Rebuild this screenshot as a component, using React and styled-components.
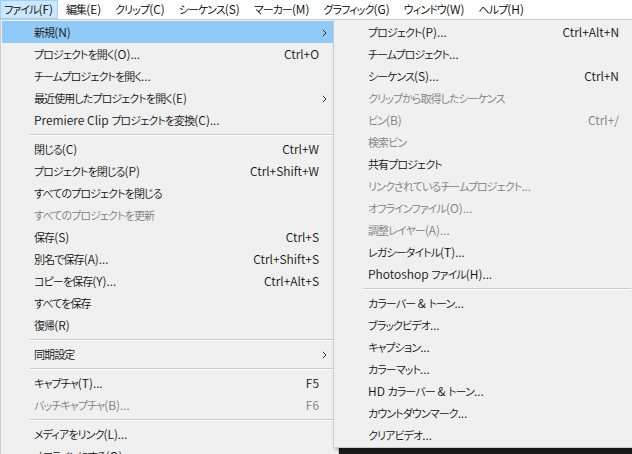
import React from "react";
import styled, { createGlobalStyle } from "styled-components";

const GlobalStyle = createGlobalStyle`
  html, body { margin: 0; padding: 0; background: #1b1b1b; }
  body {
    font-family: "Noto Sans CJK JP", "Noto Sans", sans-serif;
    font-size: 12px;
    font-weight: 350;
    color: #000;
  }
`;

const Page = styled.div`
  position: relative;
  width: 632px;
  height: 454px;
  overflow: hidden;
  background: #1b1b1b;
`;

const MenuBar = styled.div`
  display: flex;
  height: 19px;
  background: #ffffff;
`;

const BarItem = styled.div`
  display: flex;
  align-items: center;
  padding: 0 6px 1px;
  border: 1px solid ${(p) => (p.$active ? "#99d1ff" : "transparent")};
  background: ${(p) => (p.$active ? "#cce8ff" : "transparent")};
  white-space: nowrap;
  line-height: 1;
  &:first-child { padding-left: 3px; padding-right: 4px; margin-right: 1px; }
`;

const Kana = styled.span`
  font-size: 11px;
  letter-spacing: -0.9px;
  font-feature-settings: "palt";
`;

const Menu = styled.div`
  position: absolute;
  top: 19px;
  left: ${(p) => p.$left}px;
  width: ${(p) => p.$width}px;
  box-sizing: border-box;
  display: flex;
  flex-direction: column;
  background: #f0f0f0;
  border: 1px solid #cccccc;
  padding: 1px;
  box-shadow: 2px 2px 3px rgba(0, 0, 0, 0.25);
  z-index: ${(p) => p.$z};
`;

const Item = styled.div`
  position: relative;
  display: flex;
  align-items: center;
  height: 22px;
  flex: none;
  padding-left: ${(p) => p.$indent}px;
  padding-right: ${(p) => p.$right}px;
  background: ${(p) => (p.$hl ? "#91c9f7" : "transparent")};
  color: ${(p) => (p.$disabled ? "#7d7d7d" : "#111")};
  white-space: nowrap;
  line-height: 1;
`;

const Label = styled.span`
  flex: 1;
`;

const Shortcut = styled.span``;

const Arrow = styled.svg`
  position: absolute;
  right: ${(p) => p.$right}px;
  top: 8px;
`;

const Separator = styled.div`
  flex: none;
  height: 0;
  margin: 3px 0 2px ${(p) => p.$indent}px;
  border-top: 1px solid #cacaca;
  border-bottom: 1px solid #ffffff;
`;

const CJK = /([\u3000-\u30ff\u3400-\u9fff\uff00-\uffef]+)/;
const JText = ({ text }) =>
  text.split(CJK).map((part, i) => (i % 2 ? <Kana key={i}>{part}</Kana> : part));

const Chevron = ({ right }) => (
  <Arrow $right={right} width="5" height="8" viewBox="0 0 5 8">
    <polyline points="0.8,0.8 4,4 0.8,7.2" fill="none" stroke="#333" strokeWidth="1" />
  </Arrow>
);

const barItems = [
  "ファイル(F)",
  "編集(E)",
  "クリップ(C)",
  "シーケンス(S)",
  "マーカー(M)",
  "グラフィック(G)",
  "ウィンドウ(W)",
  "ヘルプ(H)",
];

const mainItems = [
  { l: "新規(N)", sub: true, hl: true },
  { l: "プロジェクトを開く(O)...", s: "Ctrl+O" },
  { l: "チームプロジェクトを開く..." },
  { l: "最近使用したプロジェクトを開く(E)", sub: true },
  { l: "Premiere Clip プロジェクトを変換(C)..." },
  { sep: true },
  { l: "閉じる(C)", s: "Ctrl+W" },
  { l: "プロジェクトを閉じる(P)", s: "Ctrl+Shift+W" },
  { l: "すべてのプロジェクトを閉じる" },
  { l: "すべてのプロジェクトを更新", d: true },
  { l: "保存(S)", s: "Ctrl+S" },
  { l: "別名で保存(A)...", s: "Ctrl+Shift+S" },
  { l: "コピーを保存(Y)...", s: "Ctrl+Alt+S" },
  { l: "すべてを保存" },
  { l: "復帰(R)" },
  { sep: true },
  { l: "同期設定", sub: true },
  { sep: true },
  { l: "キャプチャ(T)...", s: "F5" },
  { l: "バッチキャプチャ(B)...", s: "F6", d: true },
  { sep: true },
  { l: "メディアをリンク(L)..." },
  { l: "オフラインにする(O)..." },
];

const subItems = [
  { l: "プロジェクト(P)...", s: "Ctrl+Alt+N" },
  { l: "チームプロジェクト..." },
  { l: "シーケンス(S)...", s: "Ctrl+N" },
  { l: "クリップから取得したシーケンス", d: true },
  { l: "ビン(B)", s: "Ctrl+/", d: true },
  { l: "検索ビン", d: true },
  { l: "共有プロジェクト" },
  { l: "リンクされているチームプロジェクト...", d: true },
  { l: "オフラインファイル(O)...", d: true },
  { l: "調整レイヤー(A)...", d: true },
  { l: "レガシータイトル(T)..." },
  { l: "Photoshop ファイル(H)..." },
  { sep: true },
  { l: "カラーバー & トーン..." },
  { l: "ブラックビデオ..." },
  { l: "キャプション..." },
  { l: "カラーマット..." },
  { l: "HD カラーバー & トーン..." },
  { l: "カウントダウンマーク..." },
  { l: "クリアビデオ..." },
];

const renderItems = (items, indent, right, sepIndent, arrowRight) =>
  items.map((it, i) =>
    it.sep ? (
      <Separator key={i} $indent={sepIndent} />
    ) : (
      <Item key={i} $indent={indent} $right={right} $hl={it.hl} $disabled={it.d}>
        <Label>
          <JText text={it.l} />
        </Label>
        {it.s && <Shortcut>{it.s}</Shortcut>}
        {it.sub && <Chevron right={arrowRight} />}
      </Item>
    )
  );

export default function App() {
  return (
    <Page>
      <GlobalStyle />
      <MenuBar>
        {barItems.map((b, i) => (
          <BarItem key={b} $active={i === 0}>
            <JText text={b} />
          </BarItem>
        ))}
      </MenuBar>
      <Menu $left={0} $width={339} $z={1}>
        {renderItems(mainItems, 32, 18, 28, 10)}
      </Menu>
      <Menu $left={333} $width={300} $z={2}>
        {renderItems(subItems, 33, 12, 28, 10)}
      </Menu>
    </Page>
  );
}
